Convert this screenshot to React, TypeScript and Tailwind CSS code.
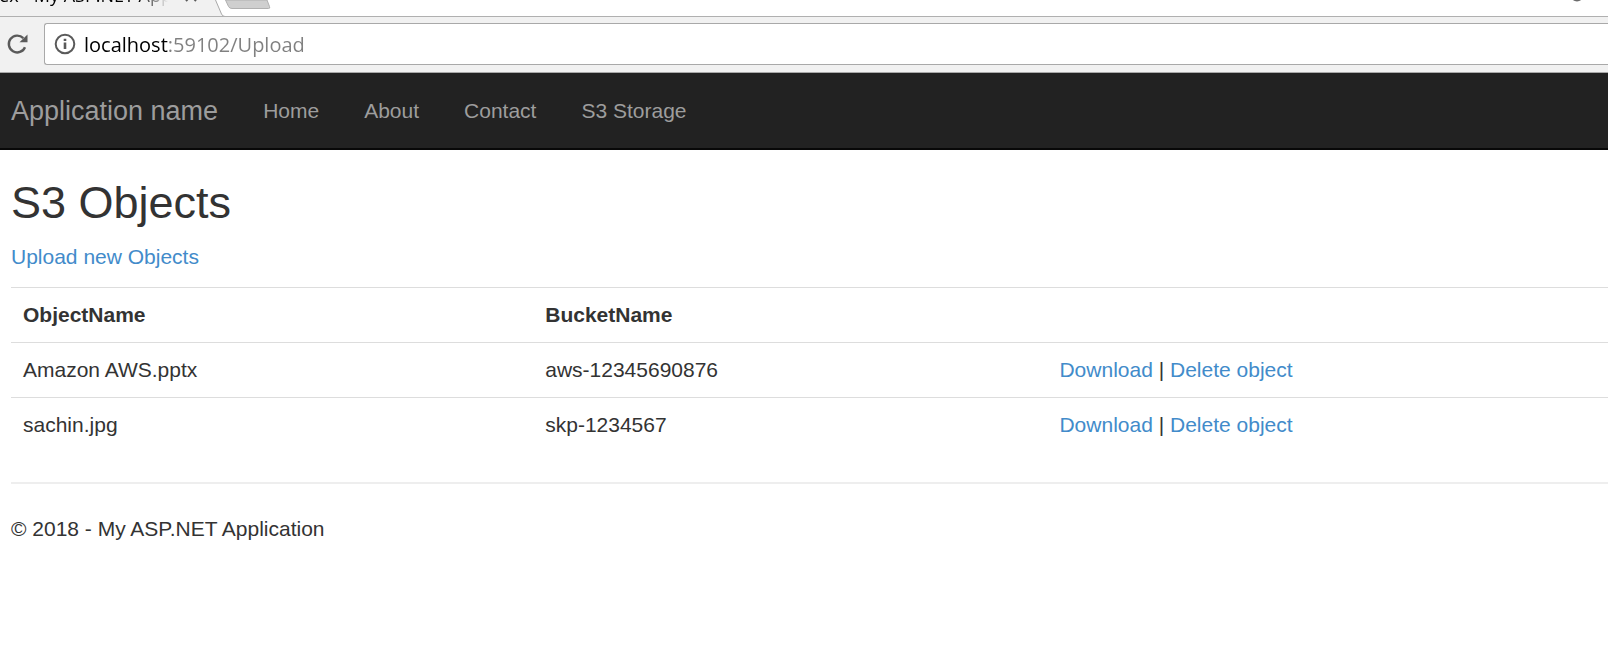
const navLinks = ["Home", "About", "Contact", "S3 Storage"];

const objects = [
  { name: "Amazon AWS.pptx", bucket: "aws-12345690876" },
  { name: "sachin.jpg", bucket: "skp-1234567" },
];

const linkClass = "text-[#428bca] hover:underline";

function ReloadIcon() {
  return (
    <svg viewBox="0 0 22 22" className="size-[22px]" aria-hidden="true">
      <path d="M17.3 5.2A8.4 8.4 0 1 0 19 14.2" fill="none" stroke="#5a5a5a" strokeWidth="2.4" />
      <path d="M21.500 1.500V9.300H13.500Z" fill="#5a5a5a" />
    </svg>
  );
}

function InfoIcon() {
  return (
    <svg viewBox="0 0 22 22" className="size-[22px] shrink-0" aria-hidden="true">
      <circle cx="11" cy="11" r="9.3" fill="none" stroke="#5a5a5a" strokeWidth="2" />
      <path d="M9.7 5.8h2.6v2.3H9.7zM9.7 9.6h2.6v6.4H9.7z" fill="#5a5a5a" />
    </svg>
  );
}

function TabStrip() {
  return (
    <div className="relative flex h-[17px] overflow-hidden border-b border-[#b0b0b0] bg-white">
      <svg className="absolute top-0 left-0 h-[17px] w-[280px]" viewBox="0 0 280 17" aria-hidden="true">
        <path d="M0 0H215.500L221.500 14Q222.500 16.500 225 16.500V17H0Z" fill="#f1f1f1" />
        <path d="M215.500 0L221.500 14Q222.500 16.500 225 16.500" fill="none" stroke="#a9a9a9" />
        <path d="M225.500 0L228.500 6.500Q229.500 8.500 232 8.500H268.500Q270.500 8.500 269.500 6.500L267 0Z" fill="#cfcfcf" stroke="#b0b0b0" />
      </svg>
      <div className="relative -mt-[17px] -ml-7 h-6 w-[196px] overflow-hidden bg-linear-to-r from-black from-85% to-transparent bg-clip-text font-['Open_Sans','Noto_Sans',sans-serif] text-[18px] leading-6 whitespace-nowrap text-transparent">
        Index - My ASP.NET App
      </div>
      <button type="button" aria-label="Close tab" className="relative -mt-3 ml-4 size-[14px]">
        <svg viewBox="0 0 14 14" className="size-[14px]" aria-hidden="true">
          <path d="M2 2L12 13M12 2L2 13" stroke="#5a5a5a" strokeWidth="2" />
        </svg>
      </button>
      <svg viewBox="0 0 14 14" className="-mt-3 mr-6 ml-auto size-[14px]" aria-hidden="true">
        <circle cx="7" cy="7" r="6.500" fill="#6a6a6a" />
      </svg>
    </div>
  );
}

export default function App() {
  return (
    <div className="min-h-screen overflow-x-hidden bg-white font-['Liberation_Sans',Arial,sans-serif] text-[21px] leading-[30px] text-[#333]">
      <TabStrip />
      <div className="flex items-center gap-4 border-b border-[#a9a9a9] bg-[#f1f1f1] pt-[6px] pb-[7px] pl-[6px]">
        <button type="button" aria-label="Reload">
          <ReloadIcon />
        </button>
        <div className="flex h-[42px] flex-1 items-center rounded-l-[3px] border border-r-0 border-[#a9a9a9] bg-white pl-[9px]">
          <InfoIcon />
          <input
            type="text"
            aria-label="Address"
            defaultValue="localhost:59102/Upload"
            className="ml-2 h-10 flex-1 bg-linear-to-r from-black from-[84px] to-[#808080] to-[84px] bg-clip-text font-['Open_Sans','Noto_Sans',sans-serif] text-[20px] text-transparent caret-black outline-none"
          />
        </div>
      </div>

      <nav className="flex h-[77px] items-center gap-[45px] border-b-2 border-[#080808] bg-[#222] pl-[11px] text-[#9d9d9d]">
        <a href="#home" className="text-[27px]">Application name</a>
        {navLinks.map((label) => (
          <a key={label} href="#nav">{label}</a>
        ))}
      </nav>

      <main className="pl-[11px]">
        <h2 className="mt-7 mb-[14px] text-[45px] leading-[50px]">S3 Objects</h2>
        <p className="mb-[15px]">
          <a href="#upload" className={linkClass}>Upload new Objects</a>
        </p>
        <table className="mb-[30px] w-full table-fixed text-left">
          <colgroup>
            <col className="w-[32.7%]" />
            <col className="w-[32.2%]" />
            <col />
          </colgroup>
          <thead>
            <tr className="border-t border-[#ddd]">
              <th className="p-3 font-bold">ObjectName</th>
              <th className="p-3 font-bold">BucketName</th>
              <th className="p-3" />
            </tr>
          </thead>
          <tbody>
            {objects.map((o) => (
              <tr key={o.name} className="border-t border-[#ddd]">
                <td className="p-3">{o.name}</td>
                <td className="p-3">{o.bucket}</td>
                <td className="p-3">
                  <a href="#download" className={linkClass}>Download</a> |{" "}
                  <a href="#delete" className={linkClass}>Delete object</a>
                </td>
              </tr>
            ))}
          </tbody>
        </table>
        <hr className="mb-[30px] border-t-2 border-[#eee]" />
        <footer>
          <p>© 2018 - My ASP.NET Application</p>
        </footer>
      </main>
    </div>
  );
}
